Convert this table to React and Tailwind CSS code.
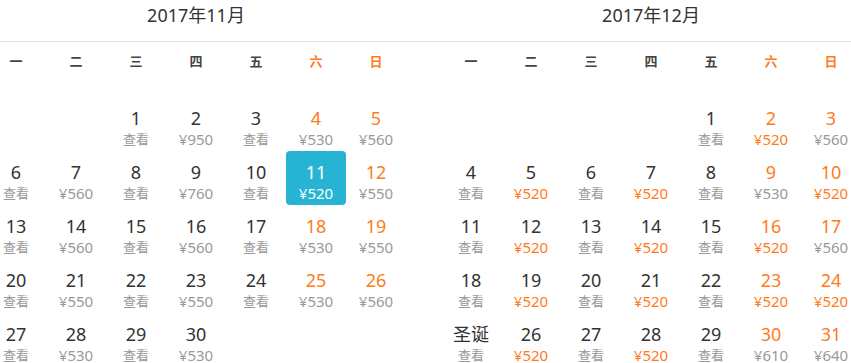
import React from "react";

const WEEKDAYS = ["一", "二", "三", "四", "五", "六", "日"];

// 每月数据：offset 为 1 号前的空格数（周一开头）
const months = [
  {
    title: "2017年11月",
    offset: 2,
    days: [
      null, 950, null, 530, 560,
      null, 560, null, 760, null, 520, 550,
      null, 560, null, 560, null, 530, 550,
      null, 550, null, 550, null, 530, 560,
      null, 530, null, 530,
    ],
    selected: 11,
    cheap: null,
  },
  {
    title: "2017年12月",
    offset: 4,
    days: [
      null, 520, 560,
      null, 520, null, 520, null, 530, 520,
      null, 520, null, 520, null, 520, 560,
      null, 520, null, 520, null, 520, 520,
      null, 520, null, 520, null, 610, 640,
    ],
    selected: null,
    cheap: 520,
    holidays: { 25: "圣诞" },
  },
];

const DayCell = ({ day, price, col, selected, cheap, label }) => {
  const weekend = col >= 5;
  if (selected) {
    return (
      <div className="h-[54px] w-[60px] flex flex-col items-center pt-[10px] rounded bg-[#27b4d4] text-white">
        <span className="text-[18px] leading-[22px]">{day}</span>
        <span className="text-[15px] leading-[20px]">¥{price}</span>
      </div>
    );
  }
  return (
    <div className="h-[54px] w-[60px] flex flex-col items-center pt-[10px]">
      <span
        className={
          weekend
            ? "text-[18px] leading-[22px] text-[#ff7b1a]"
            : "text-[18px] leading-[22px] text-[#333]"
        }
      >
        {label || day}
      </span>
      {price ? (
        <span
          className={
            price === cheap
              ? "text-[15px] leading-[20px] text-[#ff7b1a]"
              : "text-[15px] leading-[20px] text-[#999]"
          }
        >
          ¥{price}
        </span>
      ) : (
        <span className="text-[13px] leading-[20px] text-[#999]">查看</span>
      )}
    </div>
  );
};

const MonthGrid = ({ month }) => {
  const cells = [];
  for (let i = 0; i < month.offset; i++) {
    cells.push(<div key={"e" + i} className="h-[54px] w-[60px]" />);
  }
  month.days.forEach((price, idx) => {
    const day = idx + 1;
    const col = (month.offset + idx) % 7;
    cells.push(
      <DayCell
        key={day}
        day={day}
        price={price}
        col={col}
        selected={month.selected === day}
        cheap={month.cheap}
        label={month.holidays && month.holidays[day]}
      />
    );
  });

  return (
    <div className="w-[420px] shrink-0">
      <div className="grid grid-cols-7 h-[40px] items-center text-[13px] font-semibold">
        {WEEKDAYS.map((w, i) => (
          <div
            key={w}
            className={i >= 5 ? "text-center text-[#ff7b1a]" : "text-center text-[#444]"}
          >
            {w}
          </div>
        ))}
      </div>
      <div className="grid grid-cols-7 mt-[15px]">{cells}</div>
    </div>
  );
};

export default function App() {
  return (
    <div
      className="h-[363px] w-[851px] overflow-hidden bg-white"
      style={{ fontFamily: '"Noto Sans", "Noto Sans CJK SC", sans-serif' }}
    >
      <div className="border-b border-[#e3e3e3]">
        <div className="flex gap-[35px] -ml-[14px]">
          {months.map((m) => (
            <div
              key={m.title}
              className="w-[420px] shrink-0 h-[41px] text-center text-[18px] leading-[30px] text-[#333]"
            >
              {m.title}
            </div>
          ))}
        </div>
      </div>
      <div className="flex gap-[35px] -ml-[14px]">
        {months.map((m) => (
          <MonthGrid key={m.title} month={m} />
        ))}
      </div>
    </div>
  );
}
